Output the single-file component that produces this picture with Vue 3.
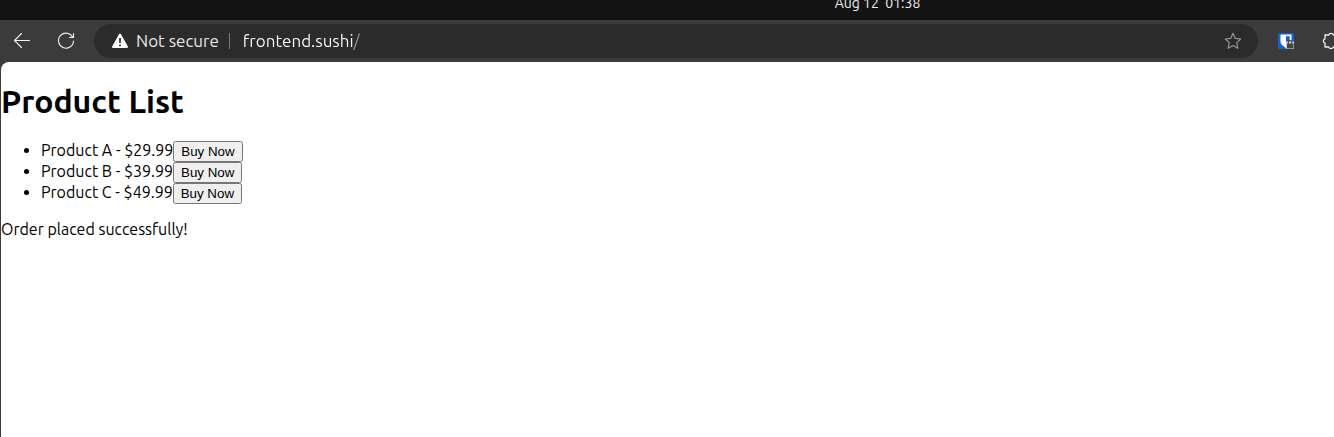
<script setup>
import { ref } from 'vue'

const address = ref('frontend.sushi/')
const products = [
  { name: 'Product A', price: '$29.99' },
  { name: 'Product B', price: '$39.99' },
  { name: 'Product C', price: '$49.99' },
]
const message = ref('Order placed successfully!')

function buy() {
  message.value = 'Order placed successfully!'
}
</script>

<template>
  <div class="screen">
    <header class="system-bar"><time class="clock">Aug 12&nbsp; 01:38</time></header>

    <nav class="toolbar" aria-label="Browser toolbar">
      <button class="icon-button" type="button" aria-label="Back">
        <svg width="18" height="18" viewBox="0 0 18 18" fill="none" stroke="#f2f2f2" stroke-width="1.1" stroke-linecap="round" stroke-linejoin="round">
          <path d="M16.500 8.500H1.500M8.500 1.500l-7 7 7 7" />
        </svg>
      </button>
      <button class="icon-button" type="button" aria-label="Reload">
        <svg width="18" height="18" viewBox="0 0 18 18" fill="none" stroke="#f2f2f2" stroke-width="1.1" stroke-linecap="round" stroke-linejoin="round">
          <path d="M15.800 5.500A7.500 7.500 0 1 0 16.500 9M16.500 1.500v4h-4" />
        </svg>
      </button>

      <div class="address-bar">
        <button class="security" type="button">
          <svg width="16" height="16" viewBox="0 0 16 16">
            <path d="M8 1.500 15 14H1Z" fill="#fff" stroke="#fff" stroke-width="2" stroke-linejoin="round" />
            <path d="M8 5v5M8 11.500v1.700" stroke="#2b2b2b" stroke-width="1.700" />
          </svg>
          <span class="security-label">Not secure</span>
        </button>
        <span class="divider"></span>
        <input v-model="address" class="address" type="text" aria-label="Address" spellcheck="false" />
        <button class="plain" type="button" aria-label="Add to favorites">
          <svg width="18" height="18" viewBox="0 0 18 18" fill="none" stroke="#989898" stroke-width="1.100" stroke-linejoin="round">
            <path d="m9 1.300 2.300 5.100 5.500.6-4.100 3.700 1.200 5.600L9 13.500l-4.900 2.800 1.200-5.600L1.200 7l5.500-.6Z" />
          </svg>
        </button>
      </div>

      <button class="plain vault" type="button" aria-label="Password manager">
        <svg width="18" height="18" viewBox="0 0 18 18">
          <rect x="1" y="1" width="16" height="16" rx="1.500" fill="#175ddc" />
          <path d="M3.500 2.500h11V9.500c0 2.800-2.300 4.700-5.500 6.500-3.200-1.800-5.500-3.700-5.500-6.500Z" fill="#fff" />
          <path d="M9 4.300H12.700V9c0 2-1.500 3.500-3.700 4.800Z" fill="#175ddc" />
          <path d="M9 9.500h8v7.500H9Z" fill="#d4d4d4" />
          <path d="M11.300 12V10.500a1.800 1.800 0 0 1 3.600 0V12" fill="none" stroke="#444" stroke-width="1.200" />
          <rect x="10" y="11.500" width="6.500" height="5" rx=".5" fill="#444" />
        </svg>
      </button>
      <button class="plain extensions" type="button" aria-label="Extensions">
        <svg width="18" height="18" viewBox="0 0 18 18" fill="none" stroke="#f2f2f2" stroke-width="1.300" stroke-linejoin="round">
          <path d="M3 3h3.800a2.300 2.300 0 0 1 4.400 0H15v3.800a2.300 2.300 0 0 1 0 4.400V15h-3.800a2.300 2.300 0 0 1-4.400 0H3v-3.800a2.300 2.300 0 0 1 0-4.400Z" />
        </svg>
      </button>
    </nav>

    <main class="page">
      <h1>Product List</h1>
      <ul>
        <li v-for="product in products" :key="product.name">{{ product.name }} - {{ product.price }}<button type="button" @click="buy">Buy Now</button></li>
      </ul>
      <p>{{ message }}</p>
    </main>
  </div>
</template>

<style>
body {
  margin: 0;
  background: #3b3b3b;
}
</style>

<style scoped>
.screen {
  display: flex;
  flex-direction: column;
  min-height: 100vh;
  overflow: hidden;
  background: #3b3b3b;
  color: #000;
  font-family: Ubuntu, "Noto Sans", sans-serif;
  font-size: 16px;
}

.system-bar {
  display: flex;
  align-items: flex-end;
  justify-content: center;
  box-sizing: border-box;
  height: 20px;
  padding: 0 0 8px 421px;
  background: #131313;
  color: #eee;
}

.clock {
  font-size: 14px;
  line-height: 18px;
}

.toolbar {
  display: flex;
  align-items: center;
  height: 42px;
  overflow: hidden;
}

.icon-button,
.plain,
.security {
  display: flex;
  flex-shrink: 0;
  align-items: center;
  justify-content: center;
  margin: 0;
  padding: 0;
  border: 0;
  background: none;
  color: #e6e6e6;
  font: inherit;
}

svg {
  flex-shrink: 0;
}

.icon-button {
  width: 44px;
  height: 34px;
}

.address-bar {
  display: flex;
  flex: 1;
  align-items: center;
  min-width: 0;
  height: 34px;
  margin-left: 6px;
  padding: 0 16px 0 18px;
  border-radius: 17px;
  background: #2b2b2b;
  font-size: 17px;
}

.security {
  gap: 8px;
}

.security-label {
  padding-bottom: 2px;
}

.divider {
  width: 1px;
  height: 16px;
  margin: 0 13px 0 10px;
  background: #777;
}

.address {
  flex: 1;
  min-width: 0;
  padding: 0 0 2px;
  border: 0;
  outline: 0;
  background: linear-gradient(to right, #fff 110px, #999 110px);
  background-clip: text;
  color: transparent;
  font: inherit;
}

.vault {
  margin-left: 19px;
}

.extensions {
  justify-content: flex-start;
  width: 12px;
  margin-left: 27px;
}

.page {
  flex: 1;
  margin-left: 1px;
  overflow: hidden;
  border-top-left-radius: 8px;
  background: #fff;
}

h1 {
  margin: 21px 0;
  font-size: 32px;
  font-weight: bold;
  line-height: 37px;
}

ul {
  margin: 0 0 16px;
  padding-left: 40px;
}

p {
  margin: 0;
}
</style>
